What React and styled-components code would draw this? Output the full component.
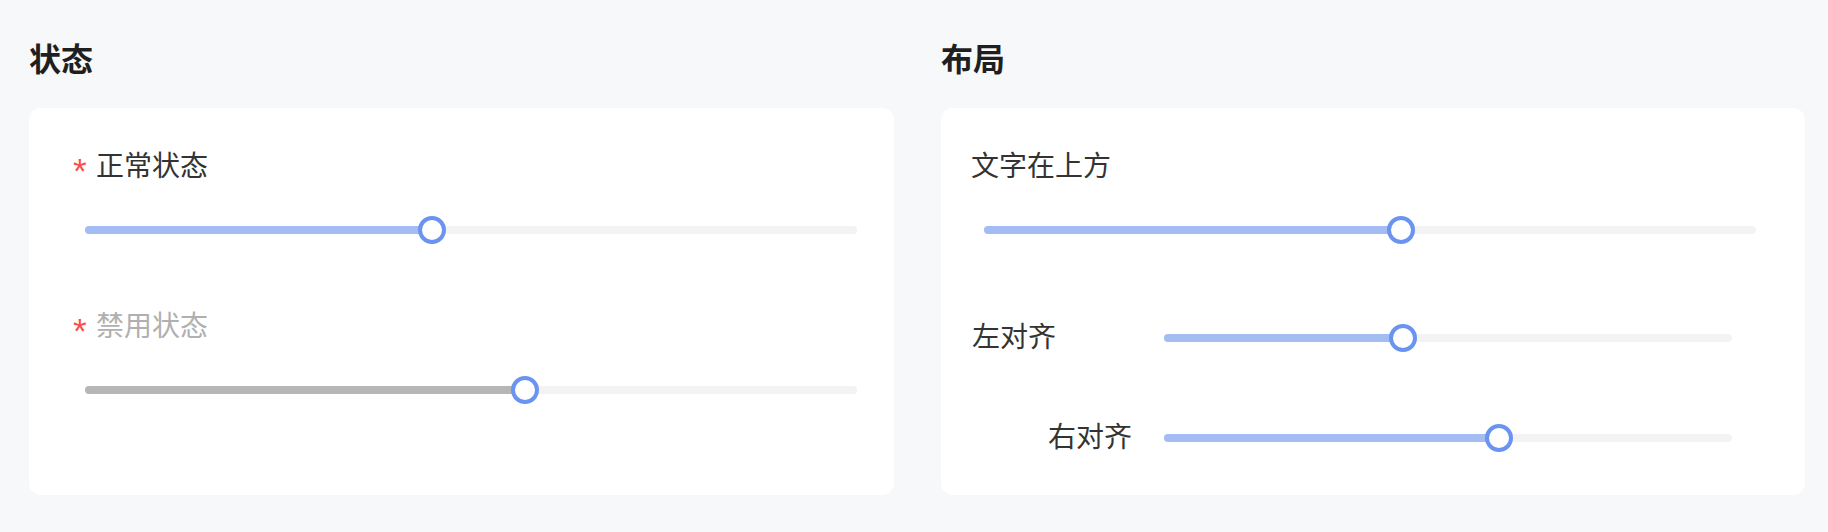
import React from "react";
import styled, { createGlobalStyle } from "styled-components";

const Global = createGlobalStyle`
  html, body { margin: 0; padding: 0; background: #f7f8fa; }
  body { font-family: "Noto Sans CJK SC", "Noto Sans", sans-serif; }
`;

const Page = styled.div`
  display: grid;
  grid-template-columns: 865px 864px;
  column-gap: 47px;
  padding: 41px 23px 37px 29px;
  min-height: 532px;
  box-sizing: border-box;
  background: #f7f8fa;
`;

const Section = styled.section`
  display: flex;
  flex-direction: column;
`;

const Title = styled.h2`
  margin: 0 0 27px;
  height: 40px;
  font-size: 32px;
  line-height: 33px;
  font-weight: 700;
  color: #1f1f1f;
`;

const Card = styled.div`
  background: #ffffff;
  border-radius: 12px;
  height: 387px;
  box-sizing: border-box;
  padding-top: 38px;
  display: flex;
  flex-direction: column;
`;

const Item = styled.div`
  display: flex;
  flex-direction: column;
  margin-top: ${(p) => p.$gap || 0}px;
`;

const Label = styled.div`
  display: flex;
  align-items: flex-start;
  font-size: 28px;
  line-height: 36px;
  height: 40px;
  color: ${(p) => (p.$disabled ? "#b0b0b0" : "#333333")};
  padding-left: ${(p) => p.$inset || 0}px;
  white-space: nowrap;
`;

const Star = styled.span`
  display: block;
  color: #f5504f;
  font-family: "Liberation Sans", sans-serif;
  font-size: 35px;
  line-height: 26px;
  height: 26px;
  width: 14px;
  margin-right: 9px;
  margin-top: 12px;
`;

const SliderLine = styled.div`
  margin-top: 30px;
  height: 28px;
  display: flex;
  align-items: center;
  padding-left: ${(p) => p.$inset}px;
`;

const Row = styled.div`
  display: flex;
  align-items: center;
  height: 40px;
  margin-top: ${(p) => p.$gap}px;
  padding-left: 31px;
  gap: 30px;
`;

const RowLabel = styled.div`
  width: 162px;
  height: 40px;
  box-sizing: border-box;
  padding-right: ${(p) => (p.$align === "right" ? 2 : 0)}px;
  font-size: 28px;
  line-height: 35px;
  color: #333333;
  text-align: ${(p) => p.$align};
  white-space: nowrap;
`;

const Track = styled.div`
  position: relative;
  width: ${(p) => p.$width}px;
  height: 8px;
  border-radius: 4px;
  background: #f3f3f3;
`;

const Fill = styled.div`
  height: 100%;
  border-radius: 4px;
  background: ${(p) => (p.$disabled ? "#b6b6b6" : "#a3bcf1")};
`;

const Thumb = styled.div`
  position: absolute;
  top: 50%;
  width: 28px;
  height: 28px;
  box-sizing: border-box;
  border: 4px solid #6a94f0;
  border-radius: 50%;
  background: #ffffff;
  transform: translate(-50%, -50%);
`;

function Slider({ value, width, disabled }) {
  return (
    <Track $width={width}>
      <Fill $disabled={disabled} style={{ width: `${value}%` }} />
      <Thumb style={{ left: `${value}%` }} />
    </Track>
  );
}

export default function App() {
  return (
    <>
      <Global />
      <Page>
        <Section>
          <Title>状态</Title>
          <Card>
            <Item>
              <Label $inset={44}>
                <Star>*</Star>正常状态
              </Label>
              <SliderLine $inset={56}>
                <Slider value={45} width={772} />
              </SliderLine>
            </Item>
            <Item $gap={62}>
              <Label $inset={44} $disabled>
                <Star>*</Star>禁用状态
              </Label>
              <SliderLine $inset={56}>
                <Slider value={57} width={772} disabled />
              </SliderLine>
            </Item>
          </Card>
        </Section>
        <Section>
          <Title>布局</Title>
          <Card>
            <Item>
              <Label $inset={30}>文字在上方</Label>
              <SliderLine $inset={43}>
                <Slider value={54} width={772} />
              </SliderLine>
            </Item>
            <Row $gap={74}>
              <RowLabel $align="left">左对齐</RowLabel>
              <Slider value={42} width={568} />
            </Row>
            <Row $gap={60}>
              <RowLabel $align="right">右对齐</RowLabel>
              <Slider value={59} width={568} />
            </Row>
          </Card>
        </Section>
      </Page>
    </>
  );
}
